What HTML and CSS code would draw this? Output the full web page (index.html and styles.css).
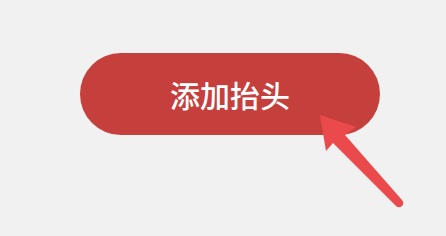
FILE: index.html
```html
<!DOCTYPE html>
<html lang="zh">
<head>
    <meta charset="UTF-8">
    <meta name="viewport" content="width=device-width, initial-scale=1.0">
    <title>添加抬头</title>
    <link rel="stylesheet" href="styles.css">
</head>
<body>

<div class="page">
    <button class="add-title">添加抬头</button>

    <svg class="pointer" width="446" height="236" viewBox="0 0 446 236">
        <path d="M320 115 L356 127 L345 135 L402 200 A4 4 0 0 1 396 206 L333 143 L326 151 Z" fill="#ea4a4c"/>
    </svg>
</div>

</body>
</html>
```

FILE: styles.css
```css
body {
    margin: 0;
    background-color: #f1f1f1;
    font-family: "Noto Sans CJK SC", "Noto Sans", sans-serif;
}

.page {
    position: relative;
    width: 446px;
    height: 236px;
    padding-top: 53px;
    padding-left: 80px;
    box-sizing: border-box;
}

.add-title {
    display: flex;
    align-items: center;
    justify-content: center;
    width: 300px;
    height: 82px;
    border: none;
    border-radius: 41px;
    background-color: #c5403d;
    color: #ffffff;
    font-family: inherit;
    font-size: 30px;
    font-weight: 500;
    padding: 0;
}

.pointer {
    position: absolute;
    left: 0;
    top: 0;
}
```
